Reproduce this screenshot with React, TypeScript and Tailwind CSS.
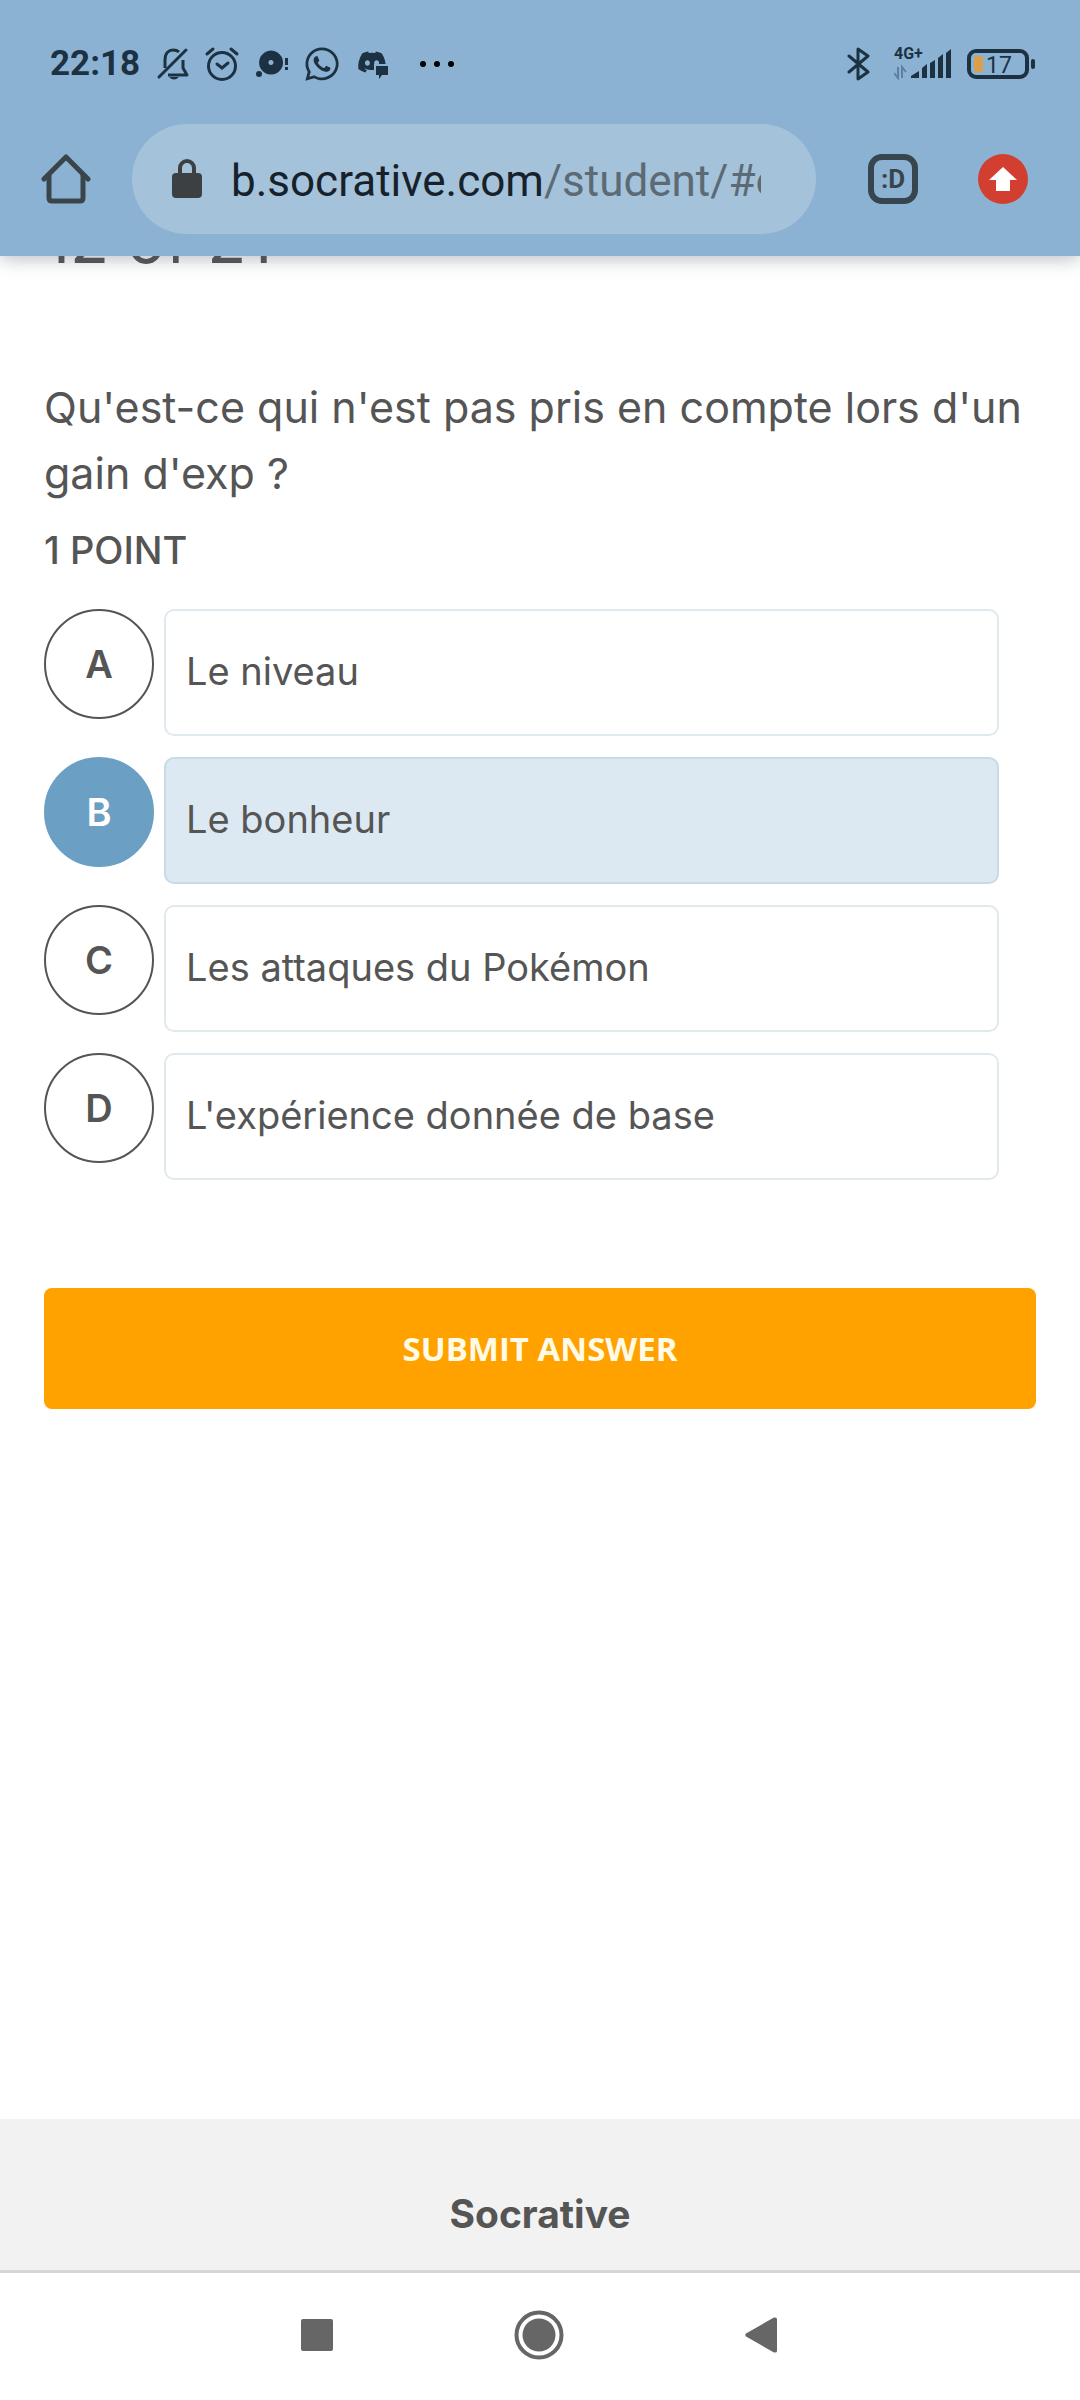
import React, { useState } from "react";
import { FaDiscord, FaWhatsapp } from "react-icons/fa";

const answers = [
  { letter: "A", text: "Le niveau" },
  { letter: "B", text: "Le bonheur" },
  { letter: "C", text: "Les attaques du Pokémon" },
  { letter: "D", text: "L'expérience donnée de base" },
];

const StatusBar = () => {
  return (
    <div className="flex h-[124px] items-start justify-between pl-[50px] pr-11 pt-[46px] text-[#1c3243]">
      <div className="flex h-9 items-center">
        <span className="w-[106px] text-[35px] font-bold leading-9">22:18</span>
        {/* muted bell */}
        <svg width="34" height="36" viewBox="0 0 34 36" fill="none" stroke="currentColor" strokeWidth="3">
          <path d="M9 22V14C9 7 13 4 17 4C20 4 22 5 23 6M27 14V22L31 29H12" strokeLinejoin="round" />
          <path d="M3 31L30 4" strokeLinecap="round" />
          <path d="M13 31H23Q18 36 13 31Z" fill="currentColor" stroke="none" />
        </svg>
        {/* alarm */}
        <svg className="ml-[14px]" width="36" height="36" viewBox="0 0 36 36" fill="none" stroke="currentColor" strokeWidth="3" strokeLinecap="round">
          <circle cx="18" cy="20" r="13.5" />
          <path d="M13 18L18 22L24 17M3 8L9 3M27 3L33 8" />
        </svg>
        {/* disc notification */}
        <svg className="ml-4" width="34" height="36" viewBox="0 0 34 36" fill="currentColor">
          <path fillRule="evenodd" d="M15 4.500a12 12 0 1 0 .1 0ZM15 14a2.500 2.500 0 1 1-.1 0Z" />
          <circle cx="3" cy="28" r="3" />
          <path d="M29 12h3v7h-3ZM29 21h3v3h-3Z" />
        </svg>
        <FaWhatsapp className="ml-[13px] size-[38px]" />
        {/* discord with a chat bubble */}
        <svg className="ml-4" width="34" height="36" viewBox="0 0 34 36">
          <FaDiscord x="0" y="1" size="30" />
          <path d="M17 18H34V36H17Z" fill="#8cb2d3" />
          <path d="M19 20H31V29H25L22 33V29H19Z" fill="currentColor" />
        </svg>
        <svg className="ml-7" width="36" height="36" viewBox="0 0 36 36" fill="#000">
          <circle cx="4" cy="18" r="3" />
          <circle cx="18" cy="18" r="3" />
          <circle cx="32" cy="18" r="3" />
        </svg>
      </div>

      <div className="flex h-9 items-center">
        <svg width="24" height="36" viewBox="0 0 24 36" fill="none" stroke="currentColor" strokeWidth="3" strokeLinejoin="round" strokeLinecap="round">
          <path d="M2 10L21 26L11 33V3L21 10L2 26" />
        </svg>
        {/* 4G+ signal */}
        <svg className="ml-[23px]" width="58" height="36" viewBox="0 0 58 36" fill="currentColor">
          <text x="0" y="13" fontSize="16" fontWeight="700">4G+</text>
          <path d="M4 21V32L0 27M8 32V21L12 26" fill="none" stroke="#5d7f9b" strokeWidth="2" />
          <path d="M17 32V30L25 25V32ZM28 32V22L33 18V32ZM36 32V17L41 14V32ZM44 32V12L49 8V32ZM52 32V7L57 3V32Z" />
        </svg>
        {/* battery */}
        <svg className="ml-[14px]" width="70" height="36" viewBox="0 0 70 36">
          <rect x="3" y="5" width="58" height="26" rx="7" fill="none" stroke="currentColor" strokeWidth="4" />
          <rect x="8" y="10" width="9" height="16" rx="3" fill="#dca04a" />
          <rect x="65" y="13" width="4" height="10" rx="2" fill="currentColor" />
          <text x="20" y="27" fontSize="23" fill="currentColor">17</text>
        </svg>
      </div>
    </div>
  );
};

const BrowserBar = () => {
  return (
    <div className="flex items-center pb-[22px] pl-[41px] pr-[52px] text-[#3a454b]">
      <button type="button" aria-label="Home">
        <svg width="50" height="50" viewBox="0 0 50 50" fill="none" stroke="currentColor" strokeWidth="5" strokeLinejoin="round" strokeLinecap="round">
          <path d="M3 25L25 3L47 25" />
          <path d="M8 21V44Q8 47 11 47H39Q42 47 42 44V21" />
        </svg>
      </button>
      <button type="button" aria-label="Address" className="ml-[41px] flex h-[110px] min-w-0 flex-1 items-center rounded-full bg-[#a4c3da] pl-10 pr-[55px]">
        <svg className="shrink-0" width="30" height="40" viewBox="0 0 30 40">
          <rect x="0" y="14" width="30" height="25" rx="4" fill="#3c4043" />
          <path d="M8 16V9A7 7 0 0 1 22 9V16" fill="none" stroke="#3c4043" strokeWidth="4" />
        </svg>
        <span className="ml-[29px] overflow-hidden whitespace-nowrap pt-1 text-left text-[44px] leading-[56px] text-[#17212b]">
          b.socrative.com<span className="text-[#5c6a75]">/student/#enter</span>
        </span>
      </button>
      <button type="button" aria-label="Tabs" className="ml-[52px] flex size-[50px] items-center justify-center rounded-[14px] border-6 border-[#36454e] text-[26px] font-bold leading-none">
        :D
      </button>
      <button type="button" aria-label="Update" className="ml-[60px]">
        <svg width="50" height="50" viewBox="0 0 50 50">
          <circle cx="25" cy="25" r="25" fill="#d23f31" />
          <path d="M25 13L39 26H32V37H18V26H11Z" fill="#fff" />
        </svg>
      </button>
    </div>
  );
};

const App = () => {
  const [selected, setSelected] = useState("B");

  return (
    <div className="flex min-h-screen flex-col overflow-hidden bg-white font-['Inter',sans-serif] text-[#555555]">
      <header className="relative z-10 bg-[#8cb2d3] font-['Roboto',sans-serif] shadow-[0_2px_18px_rgba(60,80,100,0.4)]">
        <StatusBar />
        <BrowserBar />
      </header>

      {/* the heading is scrolled halfway under the browser bar */}
      <main className="-mt-12 flex-1 px-11">
        <h1 className="text-[64px] leading-[64px]">12 of 21</h1>
        <p className="mt-[102px] text-[43px] leading-[66px]">
          Qu'est-ce qui n'est pas pris en compte lors d'un gain d'exp ?
        </p>
        <p className="mt-5 text-[38px] font-medium leading-[48px]">1 POINT</p>

        <form onSubmit={(e) => e.preventDefault()}>
          <div className="mt-[35px] flex flex-col gap-[21px] pr-[37px]">
            {answers.map(({ letter, text }) => (
              <label key={letter} className="flex gap-[10px] text-[38px]">
                <input
                  type="radio"
                  name="answer"
                  value={letter}
                  checked={selected === letter}
                  onChange={() => setSelected(letter)}
                  className="peer sr-only"
                />
                <span className="flex size-[110px] shrink-0 items-center justify-center rounded-full border-2 border-[#555555] font-semibold peer-checked:border-[#6c9fc4] peer-checked:bg-[#6c9fc4] peer-checked:text-white">
                  {letter}
                </span>
                <span className="flex h-[127px] flex-1 items-center rounded-[10px] border-2 border-[#e0e9ed] px-5 pb-[2px] peer-checked:border-[#c8dae4] peer-checked:bg-[#dce9f2]">
                  {text}
                </span>
              </label>
            ))}
          </div>

          <button
            type="submit"
            className="mt-[108px] h-[121px] w-full rounded-lg bg-[#ffa200] font-['Open_Sans',sans-serif] text-[33px] font-bold text-[#fffbe6]"
          >
            SUBMIT ANSWER
          </button>
        </form>
      </main>

      <footer className="bg-[#f2f2f2] pb-8 pt-[70px] text-center text-[39px] font-bold leading-[49px]">
        Socrative
      </footer>

      {/* system navigation */}
      <nav className="flex h-[130px] items-center justify-center gap-[181px] border-t-3 border-[#d6d6d6] pb-[3px] pr-[2px] text-[#666666]">
        <button type="button" aria-label="Recent apps">
          <svg width="32" height="32" viewBox="0 0 32 32" fill="currentColor">
            <rect width="32" height="32" rx="2" />
          </svg>
        </button>
        <button type="button" aria-label="Home screen">
          <svg width="50" height="50" viewBox="0 0 50 50" fill="currentColor">
            <circle cx="25" cy="25" r="22.500" fill="none" stroke="currentColor" strokeWidth="4" />
            <circle cx="25" cy="25" r="16.500" />
          </svg>
        </button>
        <button type="button" aria-label="Back">
          <svg width="32" height="36" viewBox="0 0 32 36" fill="currentColor">
            <path d="M1 16.500L29 0.500Q32 0 32 2V34Q32 36 29 35.500L1 19.500Q-.5 18 1 16.500Z" />
          </svg>
        </button>
      </nav>
    </div>
  );
};

export default App;
